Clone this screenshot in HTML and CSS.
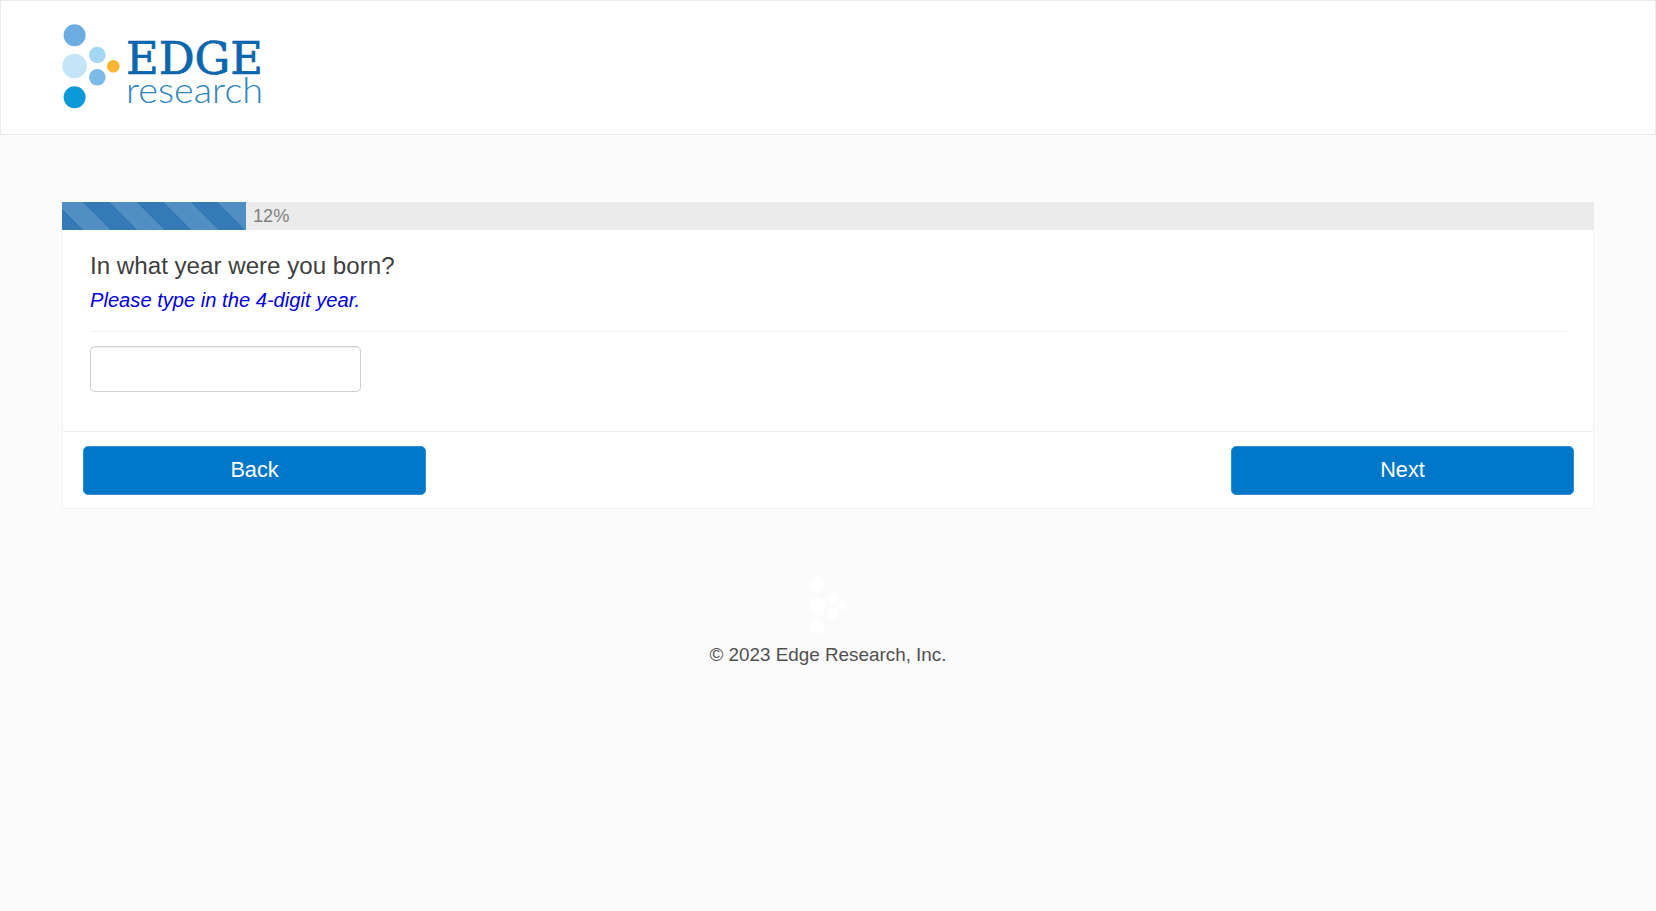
FILE: index.html
```html
<!DOCTYPE html>
<html lang="en">
<head>
<meta charset="utf-8">
<title>Edge Research Survey</title>
<link rel="stylesheet" href="styles.css">
</head>
<body>
<header class="site-header">
  <svg class="logo" viewBox="0 0 220 90" width="220" height="90" role="img" aria-label="Edge Research">
    <circle cx="12.6" cy="11.3" r="11" fill="#6cace0"/>
    <circle cx="12.6" cy="42" r="12.3" fill="#c4e5f8"/>
    <circle cx="35.3" cy="31" r="8.3" fill="#a3d6f3"/>
    <circle cx="35.3" cy="53.3" r="8.3" fill="#7cbbe8"/>
    <circle cx="51.3" cy="42.3" r="6.3" fill="#fbb634"/>
    <circle cx="12.6" cy="73.3" r="11" fill="#0a9ad8"/>
    <text class="logo-edge" x="64" y="50" textLength="137" lengthAdjust="spacingAndGlyphs">EDGE</text>
    <text class="logo-research" x="64" y="79" textLength="137" lengthAdjust="spacingAndGlyphs">research</text>
  </svg>
</header>
<main class="page">
  <section class="card">
    <div class="progress">
      <div class="progress-fill"></div>
      <span class="progress-label">12%</span>
    </div>
    <div class="card-body">
      <h1 class="question">In what year were you born?</h1>
      <p class="hint">Please type in the 4-digit year.</p>
      <hr class="rule">
      <input class="year-input" type="text" aria-label="Year">
    </div>
    <div class="card-actions">
      <button class="btn" type="button">Back</button>
      <button class="btn" type="button">Next</button>
    </div>
  </section>
  <footer class="site-footer">
    <svg class="footer-logo" viewBox="0 0 41 60" width="41" height="60" aria-hidden="true">
      <circle cx="9" cy="9" r="7.5"/>
      <circle cx="9" cy="30" r="8.5"/>
      <circle cx="24.6" cy="22.4" r="5.8"/>
      <circle cx="24.6" cy="37.4" r="5.8"/>
      <circle cx="35" cy="30" r="4.2"/>
      <circle cx="9" cy="51" r="7.5"/>
    </svg>
    <p class="copyright">© 2023 Edge Research, Inc.</p>
  </footer>
</main>
</body>
</html>
```

FILE: styles.css
```css
* { box-sizing: border-box; }
html, body { height: 100%; }
body {
  margin: 0;
  background: #fbfbfb;
  font-family: "Liberation Sans", Arial, sans-serif;
  color: #333;
}
.site-header {
  height: 135px;
  background: #fff;
  border: 1px solid #ebebeb;
  padding: 23px 0 0 61px;
}
.logo { display: block; }
.logo-edge {
  font-family: "DejaVu Serif", serif;
  font-size: 45px;
  font-weight: 400;
  fill: #0b66ad;
  stroke: #0b66ad;
  stroke-width: 0.7px;
}
.logo-research {
  font-family: "Lato", sans-serif;
  font-weight: 300;
  font-size: 36px;
  fill: #2f86bd;
}
.page { padding: 67px 62px 0; }
.card {
  background: #fff;
  border: 1px solid #f3f3f3;
  border-top: 0;
}
.progress {
  display: flex;
  align-items: center;
  height: 28px;
  margin: 0 -1px;
  background: #ebebeb;
}
.progress-fill {
  width: 184px;
  height: 100%;
  background-color: #337ab7;
  background-image: linear-gradient(45deg, rgba(255,255,255,.15) 25%, transparent 25%, transparent 50%, rgba(255,255,255,.15) 50%, rgba(255,255,255,.15) 75%, transparent 75%, transparent);
  background-size: 54px 54px;
  background-position: -6px 0;
}
.progress-label {
  margin-left: 7px;
  font-size: 18.2px;
  color: #808080;
}
.card-body { padding: 22px 26px 39px 27px; }
.question {
  margin: 0;
  font-size: 24.15px;
  line-height: 28px;
  font-weight: 400;
  color: #3f3f3f;
}
.hint {
  margin: 6px 0 0;
  font-size: 20.15px;
  line-height: 28px;
  font-style: italic;
  color: #0000e0;
}
.rule {
  margin: 17px 0 14px;
  border: 0;
  border-top: 1px solid #f2f2f2;
}
.year-input {
  display: block;
  width: 271px;
  height: 46px;
  background: #fff;
  border: 1px solid #d0d0d0;
  border-radius: 5px;
  box-shadow: inset 0 1px 1px rgba(0,0,0,.06);
}
.card-actions {
  display: flex;
  justify-content: space-between;
  height: 77px;
  padding: 14px 19px 0 20px;
  border-top: 1px solid #eeeeee;
}
.btn {
  width: 343px;
  height: 49px;
  padding: 0 0 2px;
  background: #0077c8;
  color: #fff;
  border: 1px solid #2f8fce;
  border-radius: 5px;
  font-family: inherit;
  font-size: 21.7px;
}
.site-footer {
  padding-top: 67px;
  text-align: center;
}
.footer-logo {
  display: block;
  margin: 0 auto;
  fill: #fff;
}
.copyright {
  margin: 7px 0 0;
  font-size: 18.85px;
  line-height: 24px;
  color: #505050;
}
```
